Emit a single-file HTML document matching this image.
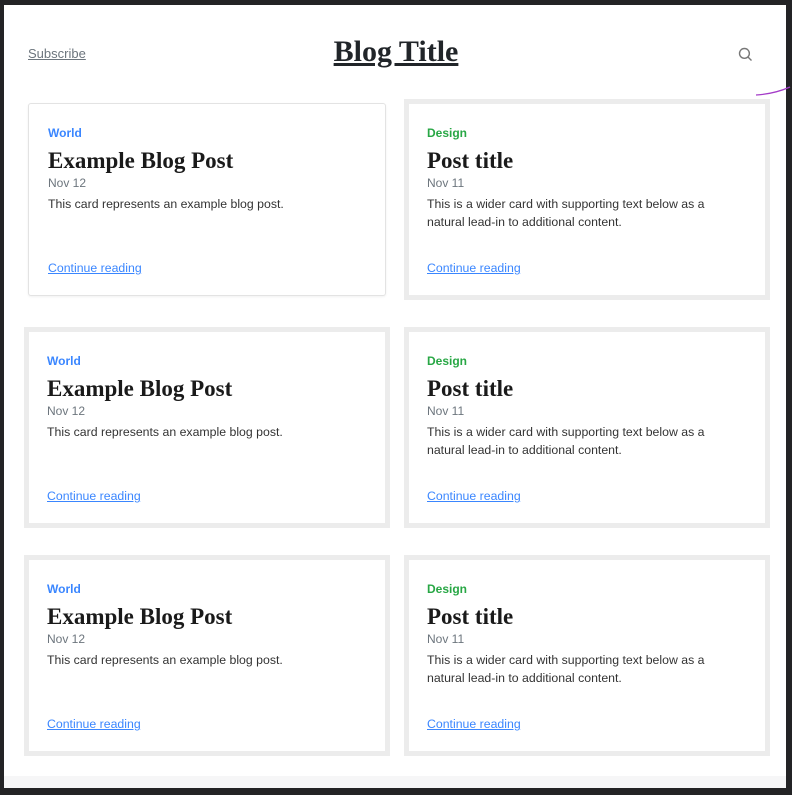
<!DOCTYPE html>
<html><head><meta charset="utf-8"><style>
*{margin:0;padding:0;box-sizing:border-box}
body{width:792px;height:795px;background:#232325;position:relative;overflow:hidden;font-family:"Liberation Sans",sans-serif}
.page{position:absolute;left:4px;top:5px;width:782px;height:783px;background:#fff}
.foot{position:absolute;left:4px;top:776px;width:782px;height:12px;background:#f6f6f7}
.sub{position:absolute;left:28px;top:46px;font-size:13px;color:#6c757d;text-decoration:underline}
.title{position:absolute;left:0;width:792px;text-align:center;top:35px;font-family:"Liberation Serif",serif;font-weight:bold;font-size:30px;color:#212529;text-decoration:underline}
.card{position:absolute;background:#fff}
.frame{position:absolute;background:#ececec}
.in{position:absolute;left:19px;top:0;right:10px}
.cat{position:absolute;top:22px;font-size:12px;font-weight:bold}
.h{position:absolute;top:44px;font-family:"Liberation Serif",serif;font-weight:bold;font-size:23px;color:#1a1a1a;white-space:nowrap}
.d{position:absolute;top:72px;font-size:12px;color:#6c757d}
.p{position:absolute;top:91px;font-size:12.3px;color:#333;line-height:18px;width:300px}
.a{position:absolute;top:157px;font-size:12.3px;color:#3a86ff;text-decoration:underline}
</style></head><body>
<div class="page"></div>
<div class="foot"></div>
<div class="sub">Subscribe</div>
<div class="title">Blog Title</div>
<svg style="position:absolute;left:738px;top:47px" width="15" height="15" viewBox="0 0 14 14"><circle cx="6" cy="6" r="4.6" fill="none" stroke="#777" stroke-width="1.3"/><line x1="9.4" y1="9.4" x2="12.6" y2="12.6" stroke="#777" stroke-width="1.3"/></svg>
<svg style="position:absolute;left:754px;top:84px" width="38" height="14"><path d="M2 11 Q20 10 36 3" fill="none" stroke="#a43cc8" stroke-width="1.3"/></svg>

<div class="card" style="left:28px;top:103px;width:358px;height:193px;border:1px solid #e3e3e3;border-radius:3px;box-shadow:0 1px 2px rgba(0,0,0,.06)">
<div class="in" style="top:0"><div class="cat" style="color:#3a86ff">World</div><div class="h">Example Blog Post</div><div class="d">Nov 12</div><div class="p">This card represents an example blog post.</div><div class="a">Continue reading</div></div></div>

<div class="frame" style="left:404px;top:99px;width:366px;height:201px"></div>
<div class="card" style="left:409px;top:104px;width:356px;height:191px"><div class="in" style="left:18px;top:0"><div class="cat" style="color:#28a745">Design</div><div class="h">Post title</div><div class="d">Nov 11</div><div class="p">This is a wider card with supporting text below as a natural lead-in to additional content.</div><div class="a">Continue reading</div></div></div>

<div class="frame" style="left:24px;top:327px;width:366px;height:201px"></div>
<div class="card" style="left:29px;top:332px;width:356px;height:191px"><div class="in" style="left:18px;top:0"><div class="cat" style="color:#3a86ff">World</div><div class="h">Example Blog Post</div><div class="d">Nov 12</div><div class="p">This card represents an example blog post.</div><div class="a">Continue reading</div></div></div>

<div class="frame" style="left:404px;top:327px;width:366px;height:201px"></div>
<div class="card" style="left:409px;top:332px;width:356px;height:191px"><div class="in" style="left:18px;top:0"><div class="cat" style="color:#28a745">Design</div><div class="h">Post title</div><div class="d">Nov 11</div><div class="p">This is a wider card with supporting text below as a natural lead-in to additional content.</div><div class="a">Continue reading</div></div></div>

<div class="frame" style="left:24px;top:555px;width:366px;height:201px"></div>
<div class="card" style="left:29px;top:560px;width:356px;height:191px"><div class="in" style="left:18px;top:0"><div class="cat" style="color:#3a86ff">World</div><div class="h">Example Blog Post</div><div class="d">Nov 12</div><div class="p">This card represents an example blog post.</div><div class="a">Continue reading</div></div></div>

<div class="frame" style="left:404px;top:555px;width:366px;height:201px"></div>
<div class="card" style="left:409px;top:560px;width:356px;height:191px"><div class="in" style="left:18px;top:0"><div class="cat" style="color:#28a745">Design</div><div class="h">Post title</div><div class="d">Nov 11</div><div class="p">This is a wider card with supporting text below as a natural lead-in to additional content.</div><div class="a">Continue reading</div></div></div>
</body></html>
